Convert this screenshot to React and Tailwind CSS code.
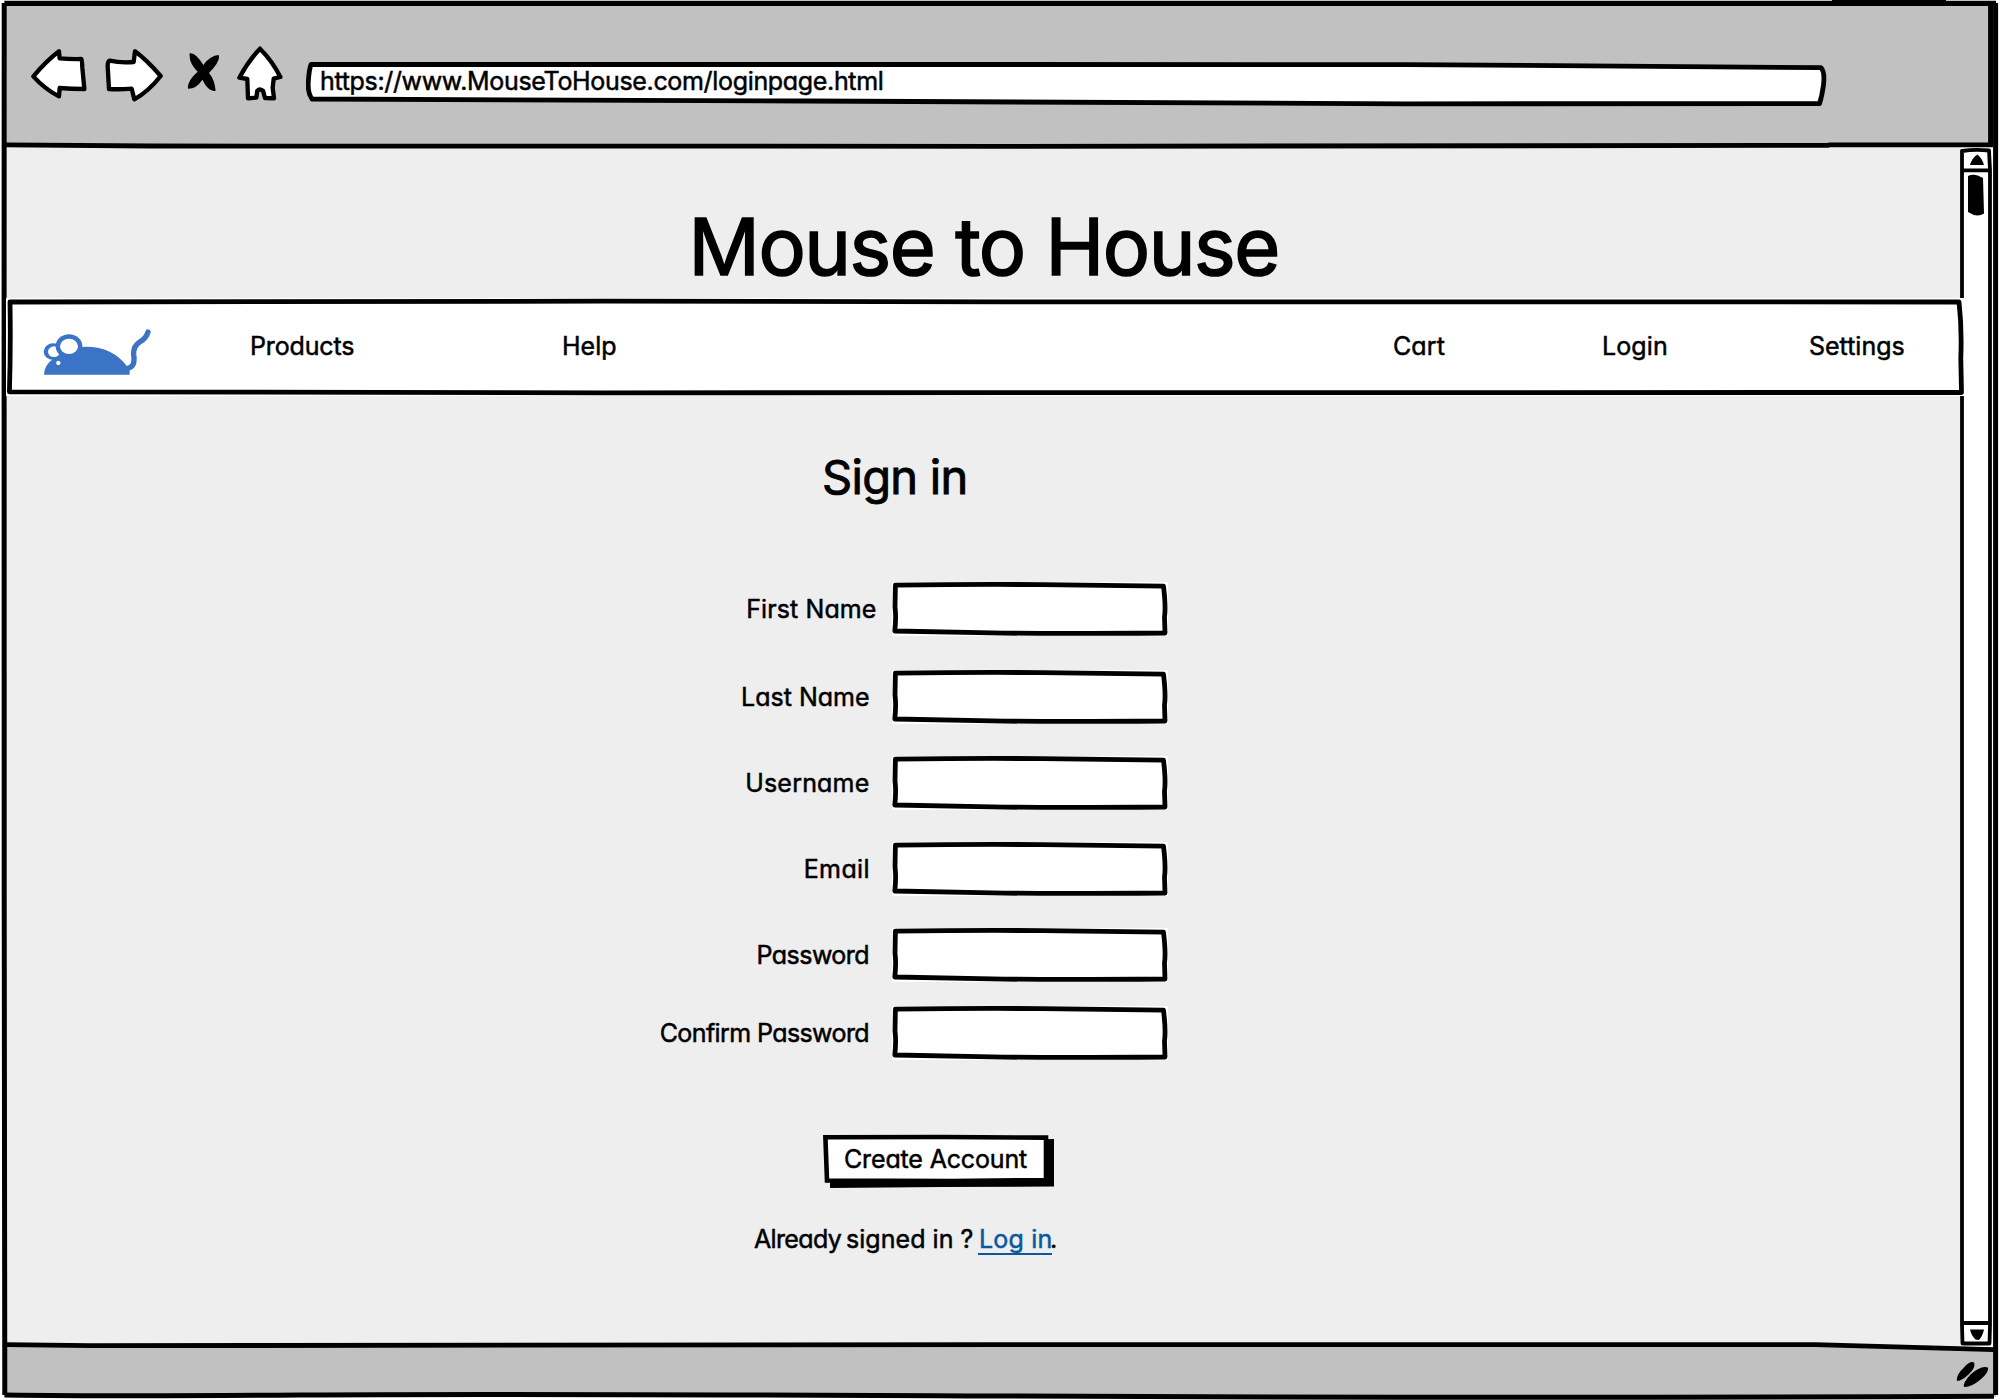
import React from "react";

const INK = "#000000";

/* Hand-drawn outline around the whole window */
function WindowOutline() {
  return (
    <svg
      className="pointer-events-none absolute inset-0"
      width="2000"
      height="1400"
      viewBox="0 0 2000 1400"
      fill="none"
      stroke={INK}
      strokeWidth="5"
      strokeLinejoin="round"
    >
      <path d="M4.5 3.5 L1000 3.6 L1996 3.4" />
      <path d="M1832 0.5 Q1870 -0.5 1946 0.5" strokeWidth="2" />
      <path d="M4.2 3 L4.1 300 L4.2 900 L4.8 1395" />
      <path d="M4.5 1395 Q120 1396.6 300 1395 T1000 1396 T1994 1396.2" />
      <path d="M1995.6 3 L1995.6 900 L1995.6 1395" />
      <path d="M1990.6 5 L1990.6 146" strokeWidth="5" />
      <path d="M6 144.9 L150 146 L1000 146.3 L1828 145.4 L1830 144.8 L1993 144.9" strokeWidth="4.8" />
      <path d="M6 1344.6 L90 1345.7 L1000 1344.6 L1815 1344.6 L1994 1349.6" strokeWidth="4.8" />
    </svg>
  );
}

function BackIcon() {
  return (
    <svg width="56" height="52" viewBox="94 141 168 156" fill="#fff" stroke={INK} strokeWidth="13" strokeLinejoin="round">
      <path d="M101 226 Q140 180 178 151 L180 172 Q215 175 245 174 Q247 176 248 200 L254 264 Q215 264 180 261 L178 286 Q135 264 101 226 Z" />
    </svg>
  );
}

function ForwardIcon() {
  return (
    <svg width="58" height="54" viewBox="316 141 174 162" fill="#fff" stroke={INK} strokeWidth="13" strokeLinejoin="round">
      <path d="M483 225 Q440 176 406 151 L402 183 Q365 187 330 179 Q324 180 324 196 L328 264 Q360 266 396 263 L404 295 Q446 272 483 225 Z" />
    </svg>
  );
}

function StopIcon() {
  return (
    <svg width="33" height="40" viewBox="562 153 99 120" fill={INK}>
      <path d="M570 157 Q587 153 611 192 Q632 163 657 162 Q664 180 628 216 Q645 236 648 269 Q628 275 608 236 Q591 263 565 263 Q562 240 594 212 Q567 186 570 157 Z" />
    </svg>
  );
}

function HomeIcon() {
  return (
    <svg width="46" height="55" viewBox="711 137 138 165" fill="#fff" stroke={INK} strokeWidth="13" strokeLinejoin="round">
      <path d="M780 145 Q818 183 841 230 L821 235 L818 262 L822 294 L795 293 L789 271 Q779 264 772 271 L769 292 L744 294 L742 236 L718 232 Q745 182 780 145 Z" />
    </svg>
  );
}

function MouseLogo() {
  return (
    <svg width="109" height="47" viewBox="130 148 327 141" fill="#3b74c7">
      <path d="M133 285 Q134 256 160 238 L180 215 L246 202 Q334 196 384 262 Q391 270 390 285 Z" />
      <path d="M385 266 Q408 260 402 226 Q400 200 420 187 Q440 176 445 157" fill="none" stroke="#3b74c7" strokeWidth="16" strokeLinecap="round" />
      <ellipse cx="161" cy="216" rx="29" ry="25" />
      <ellipse cx="163" cy="216" rx="18" ry="16" fill="#fff" />
      <ellipse cx="208" cy="200" rx="40" ry="36" />
      <ellipse cx="208" cy="200" rx="27" ry="23" fill="#fff" />
      <circle cx="176" cy="250" r="6.5" fill="#fff" />
    </svg>
  );
}

function BrowserBar() {
  return (
    <header className="flex h-[146px] items-start bg-[#c1c1c1] pl-[27px]">
      <div className="mt-[48px]"><BackIcon /></div>
      <div className="mt-[47.5px] ml-[18px]"><ForwardIcon /></div>
      <div className="mt-[51.5px] ml-[24px]"><StopIcon /></div>
      <div className="mt-[46px] ml-[17px]"><HomeIcon /></div>
      <div className="relative mt-[59.5px] ml-[23px] flex h-[48px] w-[1522px] items-center pl-[14px]">
        <svg className="absolute inset-0" width="1522" height="48" viewBox="0 0 1522 48" fill="#fff" stroke={INK} strokeWidth="4.8" strokeLinejoin="round">
          <path d="M5 4.5 L700 4.5 L1100 4.6 L1515 7.6 Q1519 12 1517.5 25 Q1516 36 1513.5 43.7 L1100 43.8 L500 41 L6 39 Q1.5 33 2.3 22 Q3 10 5 4.5 Z" />
        </svg>
        <span className="relative -mt-[5px] text-[25px] leading-[30px] tracking-[-0.33px]">
          https://www.MouseToHouse.com/loginpage.html
        </span>
      </div>
    </header>
  );
}

function NavBar() {
  return (
    <nav className="relative z-10 ml-[2px] flex h-[98px] w-[1958px] items-start bg-white">
      <svg className="absolute inset-0" width="1958" height="98" viewBox="0 0 1958 98" fill="none" stroke={INK} strokeWidth="4.8" strokeLinejoin="round">
        <path d="M4 4 L600 3.2 L1000 3.8 L1953 4 Q1956 30 1954.8 60 L1955.5 94.5 L1200 94.6 L600 94.8 L3.4 93.8 Q4.8 50 4 4 Z" />
      </svg>
      <div className="relative mt-[31px] ml-[37px]"><MouseLogo /></div>
      <div className="relative mt-[32.5px] ml-[98px] flex text-[25px] leading-[30px]">
        <a className="w-[312px] tracking-[-0.15px]">Products</a>
        <a className="w-[831px]">Help</a>
        <a className="w-[209px] tracking-[0.1px]">Cart</a>
        <a className="w-[207px] tracking-[0.1px]">Login</a>
        <a>Settings</a>
      </div>
    </nav>
  );
}

function Field({ label, className, labelClass }) {
  return (
    <label className={"flex h-[54px] items-start " + className}>
      <span className={"mt-[11.5px] text-right text-[25px] leading-[30px] " + labelClass}>{label}</span>
      <span className="relative ml-auto h-[54px] w-[276px] bg-white">
        <svg className="absolute inset-0" width="276" height="54" viewBox="0 0 276 54" fill="none" stroke={INK} strokeWidth="4.8" strokeLinejoin="round">
          <path d="M3.4 3.2 Q90 2 150 2.7 L271.5 4.2 Q274 25 272.5 35 L273 51 Q150 52 100 50.8 L2.8 49 Q4.3 35 3 25 Z" />
        </svg>
      </span>
    </label>
  );
}

function ScrollBar() {
  return (
    <div className="w-[35px] bg-white">
      <svg width="35" height="1201" viewBox="1958 146 35 1201" fill="none" stroke={INK} strokeWidth="3.8" strokeLinejoin="round">
        <path d="M1958 146 H1961 V1347 H1958 Z" fill="#eeeeee" stroke="none" />
        <path d="M1962 298 L1962 151 Q1975 149 1989 150.5 L1990 170 L1990 1325 L1989.5 1343.5 L1962.5 1343.5 L1962 1325 L1962 396" />
        <path d="M1962 170.3 L1990 170.3 M1962 1323 L1990 1323" />
        <path d="M1977.3 154.5 Q1982 158 1984 165 L1970 165 Q1972 158 1977.3 154.5 Z" fill={INK} stroke="none" />
        <path d="M1970 1329.5 L1984 1329.5 Q1982 1338 1978.5 1340 L1975.5 1339.5 Q1971 1335 1970 1329.5 Z" fill={INK} stroke="none" />
        <path d="M1968 176 Q1974 172.5 1983 178 L1984 213.5 Q1977 218 1968 212 Z" fill={INK} stroke="none" />
      </svg>
    </div>
  );
}

export default function App() {
  return (
    <div className="relative flex h-[1400px] w-[2000px] flex-col overflow-hidden bg-white pr-[4px] pl-[4px] font-['Inter',sans-serif] text-black [-webkit-text-stroke:0.5px_currentColor] [font-feature-settings:'cv11']">
      <BrowserBar />

      <div className="flex h-[1201px]">
        <main className="w-[1954px] shrink-0 bg-[#eeeeee]">
          <h1 className="h-[152px] pt-[52px] pl-[684.5px] text-[79px] leading-[96px] tracking-[-1.45px] [-webkit-text-stroke:1.6px_currentColor]">
            Mouse to House
          </h1>
          <NavBar />

          <form className="pl-[636px]">
            <h2 className="pt-[51px] pl-[182px] text-[47px] leading-[60px] tracking-[-0.7px] [-webkit-text-stroke:0.9px_currentColor]">
              Sign in
            </h2>
            <div className="mt-[75px] w-[528px]">
              <Field label="First Name" className="" labelClass="w-[236.5px] tracking-[0.1px]" />
              <Field label="Last Name" className="mt-[34px]" labelClass="w-[229.5px]" />
              <Field label="Username" className="mt-[32px]" labelClass="w-[229.5px] tracking-[0.2px]" />
              <Field label="Email" className="mt-[32px]" labelClass="w-[230px] tracking-[0.4px]" />
              <Field label="Password" className="mt-[32px]" labelClass="w-[229px] tracking-[-0.55px]" />
              <Field label="Confirm Password" className="mt-[24px]" labelClass="w-[229px] tracking-[-0.6px]" />
            </div>
            <button type="button" className="relative mt-[74px] ml-[182px] block h-[54px] w-[233px] text-left">
              <svg className="absolute inset-0" width="233" height="54" viewBox="0 0 233 54">
                <path d="M8 9 L232 5 L232 52.5 L120 53 L8 54 Z" fill={INK} />
                <path d="M3.4 3.3 L120 3 L224 3.6 L224 46 L130 47 L5 46.5 Z" fill="#fff" stroke={INK} strokeWidth="4.6" />
              </svg>
              <span className="relative -top-[2.5px] block pl-[22px] text-[25px] leading-[30px] tracking-[-0.15px]">
                Create Account
              </span>
            </button>
            <p className="mt-[36px] flex pl-[114px] text-[25px] leading-[30px] whitespace-nowrap">
              <span className="w-[92px] tracking-[-0.65px]">Already</span>
              <span className="w-[132px] tracking-[0.05px]">signed in ?</span>
              <a className="h-[31px] w-[74px] border-b-2 border-[#0b57a0] pl-px tracking-[0.2px] text-[#0b57a0]">Log in</a>
              <span className="-ml-[2px]">.</span>
            </p>
          </form>
        </main>
        <ScrollBar />
      </div>

      <footer className="flex h-[50px] items-start justify-end bg-[#c1c1c1] pr-[7px]">
        <svg className="mt-[14px]" width="34" height="28" viewBox="0 0 34 28" fill={INK}>
          <path d="M2 20 Q1 14 8.5 7 Q15 -0.5 19 1.5 Q21 6 14.5 12.5 Q7 20 2 20 Z" />
          <path d="M9 26 Q7.5 22 15.5 13.5 Q26 4 33 6.5 Q34 11.5 25.5 18.5 Q16 26.5 9 26 Z" />
        </svg>
      </footer>
      <WindowOutline />
    </div>
  );
}
